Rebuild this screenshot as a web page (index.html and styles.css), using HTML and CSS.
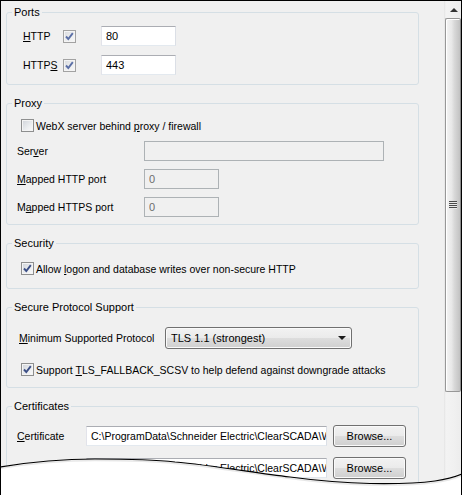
FILE: index.html
```html
<!DOCTYPE html>
<html lang="en">
<head>
    <meta charset="UTF-8">
    <title>WebX Settings</title>
    <link rel="stylesheet" href="styles.css">
</head>
<body>
    <div class="window">
        <div class="content">
            <fieldset class="group ports">
                <legend>Ports</legend>
                <div class="port-row">
                    <span class="port-label"><u>H</u>TTP</span>
                    <span class="check checked dim"><svg viewBox="0 0 11 11"><polyline points="2,5.5 4.3,8 8.8,2.2"/></svg></span>
                    <input type="text" class="field port" value="80">
                </div>
                <div class="port-row">
                    <span class="port-label">HTTP<u>S</u></span>
                    <span class="check checked dim"><svg viewBox="0 0 11 11"><polyline points="2,5.5 4.3,8 8.8,2.2"/></svg></span>
                    <input type="text" class="field port" value="443">
                </div>
            </fieldset>

            <fieldset class="group proxy">
                <legend>Proxy</legend>
                <div class="check-row">
                    <span class="check"></span>
                    <span>WebX server behind <u>p</u>roxy / firewall</span>
                </div>
                <div class="field-row">
                    <span class="field-label">Ser<u>v</u>er</span>
                    <input type="text" class="field wide" value="" disabled>
                </div>
                <div class="field-row">
                    <span class="field-label"><u>M</u>apped HTTP port</span>
                    <input type="text" class="field port" value="0" disabled>
                </div>
                <div class="field-row">
                    <span class="field-label">M<u>a</u>pped HTTPS port</span>
                    <input type="text" class="field port" value="0" disabled>
                </div>
            </fieldset>

            <fieldset class="group security">
                <legend>Security</legend>
                <div class="check-row">
                    <span class="check checked"><svg viewBox="0 0 11 11"><polyline points="2,5.5 4.3,8 8.8,2.2"/></svg></span>
                    <span>Allow <u>l</u>ogon and database writes over non-secure HTTP</span>
                </div>
            </fieldset>

            <fieldset class="group protocol">
                <legend>Secure Protocol Support</legend>
                <div class="field-row">
                    <span class="field-label protocol-label"><u>M</u>inimum Supported Protocol</span>
                    <div class="combo">
                        <span>TLS 1.1 (strongest)</span>
                        <span class="combo-arrow"></span>
                    </div>
                </div>
                <div class="check-row">
                    <span class="check checked"><svg viewBox="0 0 11 11"><polyline points="2,5.5 4.3,8 8.8,2.2"/></svg></span>
                    <span>Support <u>T</u>LS_FALLBACK_SCSV to help defend against downgrade attacks</span>
                </div>
            </fieldset>

            <fieldset class="group certificates">
                <legend>Certificates</legend>
                <div class="field-row">
                    <span class="field-label cert-label"><u>C</u>ertificate</span>
                    <input type="text" class="field path" value="C:\ProgramData\Schneider Electric\ClearSCADA\WebX\cert.pem">
                    <button type="button" class="button">Browse...</button>
                </div>
                <div class="field-row">
                    <span class="field-label cert-label">Private key</span>
                    <input type="text" class="field path" value="C:\ProgramData\Schneider Electric\ClearSCADA\WebX\key.pem">
                    <button type="button" class="button">Browse...</button>
                </div>
            </fieldset>
        </div>

        <div class="scrollbar">
            <div class="scroll-up"><span class="up-arrow"></span></div>
            <div class="thumb"><span class="grip"></span></div>
        </div>

        <!-- torn paper edge over the bottom of the dialog -->
        <svg class="torn" viewBox="0 0 462 46" width="462" height="46">
            <path class="torn-paper" d="M0,17 C30,12 60,9 95,9 C125,9 150,9 175,12 C210,15 250,22 290,27 C320,31 340,33 370,33.5 C400,34 420,33 435,31 C448,29 455,27 462,24 L462,46 L0,46 Z"/>
            <path class="torn-shadow" d="M0,18.5 C30,13.5 60,10.5 95,10.5 C125,10.5 150,10.5 175,13.5 C210,16.5 250,23.5 290,28.5 C320,32.5 340,34.5 370,35 C400,35.5 420,34.5 435,32.5 C448,30.5 455,28.5 462,25.5"/>
            <path class="torn-line" d="M0,17 C30,12 60,9 95,9 C125,9 150,9 175,12 C210,15 250,22 290,27 C320,31 340,33 370,33.5 C400,34 420,33 435,31 C448,29 455,27 462,24"/>
        </svg>
    </div>
</body>
</html>
```

FILE: styles.css
```css
body {
    margin: 0;
    font-family: "Liberation Sans", Arial, sans-serif;
    font-size: 10.5px;
    color: #000;
    background-color: #fff;
}
.window {
    position: relative;
    width: 462px;
    height: 495px;
    box-sizing: border-box;
    border: 1px solid #000;
    border-bottom: none;
    background-color: #f0f0f0;
    display: flex;
    overflow: hidden;
}
.content {
    flex: 1;
    padding-top: 5px;
    display: flex;
    flex-direction: column;
    gap: 12px;
}
.group {
    margin: 0 25px 0 5px;
    padding: 0;
    border: 1px solid #d5dfe5;
    border-radius: 3px;
    min-width: 0;
    display: flex;
    flex-direction: column;
}
.group legend {
    margin-left: 5px;
    padding: 0 2px;
    line-height: 13px;
    font-size: 11px;
}
.ports {
    padding: 7px 0 9px 0;
    gap: 9px;
}
.proxy {
    padding: 8px 0 7px 0;
    gap: 8px;
}
.security {
    padding: 11px 0 12px 0;
}
.protocol {
    padding: 13px 0 10px 0;
    gap: 13px;
}
.certificates {
    padding: 12px 0 20px 0;
    gap: 10px;
}

/* rows */
.port-row, .field-row, .check-row {
    display: flex;
    align-items: center;
}
.port-row {
    height: 20px;
    padding-left: 16px;
}
.port-label {
    width: 40px;
}
.port-row .check {
    margin-right: 25px;
}
.check-row {
    height: 15px;
    padding-left: 14px;
    gap: 2px;
}
.field-row {
    padding-left: 10px;
}
.field-label {
    width: 127px;
}
.protocol-label {
    width: 146px;
    padding-left: 2px;
}
.cert-label {
    width: 69px;
}
.certificates .field-row {
    height: 22px;
}

/* checkbox */
.check {
    width: 13px;
    height: 13px;
    box-sizing: border-box;
    border: 1px solid #8e8f8f;
    background: linear-gradient(135deg, #cfd3d9 0%, #eceef0 60%, #fbfbfb 100%);
    box-shadow: inset 0 0 0 1px #f4f4f4;
    display: flex;
    align-items: center;
    justify-content: center;
    flex-shrink: 0;
}
.check svg {
    width: 11px;
    height: 11px;
}
.check polyline {
    fill: none;
    stroke: #3c4f86;
    stroke-width: 1.9;
}
.check.dim {
    border-color: #a2a2a2;
    background: linear-gradient(135deg, #d8dade 0%, #eeeff0 60%, #f7f7f7 100%);
}
.check.dim polyline {
    stroke: #5b6fa6;
}

/* text boxes */
.field {
    box-sizing: border-box;
    height: 20px;
    margin: 0;
    padding: 0 0 0 4px;
    border: 1px solid;
    border-color: #abadb3 #dbdfe6 #e3e9ef #e2e3ea;
    background-color: #fff;
    font-family: inherit;
    font-size: 11px;
    color: #000;
    outline: none;
}
.field:disabled {
    background-color: #f0f0f0;
    border-color: #adb2b5;
    color: #6d6d6d;
}
.port {
    width: 75px;
}
.wide {
    width: 240px;
}
.path {
    width: 241px;
    margin-right: 6px;
    font-size: 10.5px;
}

/* buttons and combo */
.button, .combo {
    box-sizing: border-box;
    height: 22px;
    border: 1px solid #707070;
    border-radius: 3px;
    background: linear-gradient(#f2f2f2 0%, #ebebeb 48%, #dddddd 52%, #cfcfcf 100%);
    box-shadow: inset 0 0 0 1px #fafafa;
    font-family: inherit;
    font-size: 11px;
    color: #000;
}
.button {
    width: 73px;
    padding: 0;
}
.combo {
    width: 187px;
    display: flex;
    align-items: center;
    justify-content: space-between;
    padding: 0 5px 0 5px;
}
.combo-arrow {
    width: 0;
    height: 0;
    border-left: 4px solid transparent;
    border-right: 4px solid transparent;
    border-top: 4px solid #1a1a1a;
}

/* scrollbar */
.scrollbar {
    width: 17px;
    display: flex;
    flex-direction: column;
    background: linear-gradient(90deg, #e4e4e4 0, #f3f3f3 2px, #f0f0f0 60%, #ececec 100%);
}
.scroll-up {
    height: 17px;
    display: flex;
    align-items: center;
    justify-content: center;
}
.up-arrow {
    width: 0;
    height: 0;
    border-left: 4px solid transparent;
    border-right: 4px solid transparent;
    border-bottom: 4px solid #333;
    margin-left: 2px;
}
.thumb {
    margin-left: 1px;
    height: 374px;
    box-sizing: border-box;
    border: 1px solid #979797;
    border-right-color: #8a8a8a;
    border-radius: 2px;
    background: linear-gradient(90deg, #f4f4f4 0%, #e8e8e8 40%, #d8d8d8 60%, #c2c2c2 100%);
    box-shadow: inset 1px 1px 0 #fff;
    display: flex;
    align-items: center;
    justify-content: center;
}
.grip {
    width: 8px;
    height: 8px;
    background: repeating-linear-gradient(#4b4b4b 0, #4b4b4b 1px, #eaeaea 1px, #eaeaea 2px);
}

/* torn edge */
.torn {
    position: absolute;
    left: -1px;
    top: 449px;
}
.torn-paper {
    fill: #fff;
}
.torn-shadow {
    fill: none;
    stroke: #d0d0d0;
    stroke-width: 1.5;
    opacity: 0.5;
}
.torn-line {
    fill: none;
    stroke: #000;
    stroke-width: 1.2;
}
```
